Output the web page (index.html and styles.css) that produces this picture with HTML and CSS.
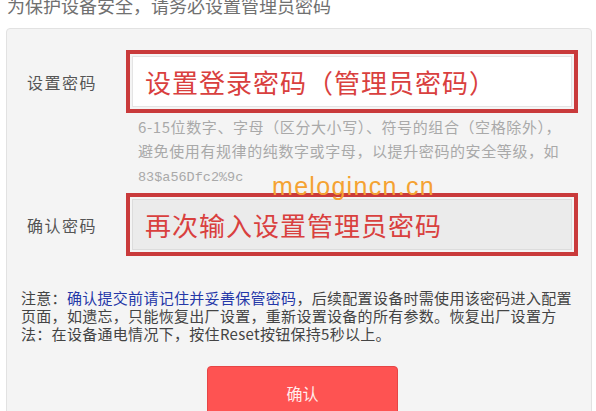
FILE: index.html
```html
<!DOCTYPE html>
<html lang="zh-CN">
<head>
    <meta charset="UTF-8">
    <meta name="viewport" content="width=device-width, initial-scale=1.0">
    <title>设置管理员密码</title>
    <link rel="stylesheet" href="styles.css">
</head>
<body>
    <p class="intro">为保护设备安全，请务必设置管理员密码</p>

    <section class="panel">
        <div class="field">
            <label class="field-label">设置密码</label>
            <div class="mark">
                <div class="input">设置登录密码（管理员密码）</div>
            </div>
        </div>

        <p class="hint">
            6-15位数字、字母（区分大小写）、符号的组合（空格除外），<br>
            避免使用有规律的纯数字或字母，以提升密码的安全等级，如<br>
            <span class="sample">83$a56Dfc2%9c</span>
        </p>

        <div class="field">
            <label class="field-label">确认密码</label>
            <div class="mark">
                <div class="input input-grey">再次输入设置管理员密码</div>
            </div>
        </div>

        <p class="note">
            注意：<span class="note-link">确认提交前请记住并妥善保管密码</span>，后续配置设备时需使用该密码进入配置<br>
            页面，如遗忘，只能恢复出厂设置，重新设置设备的所有参数。恢复出厂设置方<br>
            法：在设备通电情况下，按住Reset按钮保持5秒以上。
        </p>

        <button class="btn-confirm">确认</button>

        <span class="watermark">melogincn.cn</span>
    </section>
</body>
</html>
```

FILE: styles.css
```css
body {
    margin: 0;
    padding: 0;
    background: #fff;
    font-family: "Noto Sans CJK SC", "Liberation Sans", sans-serif;
    color: #444;
    overflow: hidden;
}

.intro {
    margin: -6px 0 0 7px;
    font-size: 18px;
    line-height: 22px;
    color: #707070;
}

.panel {
    position: relative;
    margin: 12px 4px 0 6px;
    padding: 21px 0 20px 20px;
    background: #f4f4f4;
    border: 1px solid #e2e2e2;
    border-radius: 4px;
}

.field {
    display: flex;
    align-items: center;
}

.field-label {
    width: 99px;
    font-size: 16px;
    letter-spacing: 1.5px;
    color: #555;
}

.mark {
    box-sizing: border-box;
    width: 452px;
    height: 63px;
    padding: 2px;
    border: 4px solid #c93a3b;
}

.input {
    box-sizing: border-box;
    height: 100%;
    padding-left: 12px;
    background: #fff;
    border: 1px solid #e4e4e4;
    font-size: 26px;
    line-height: 49px;
    letter-spacing: 1px;
    color: #d9403e;
}

.input-grey {
    background: #ebebeb;
    border-color: #dcdcdc;
}

.hint {
    margin: 2px 0 3px 111px;
    font-size: 15px;
    line-height: 24px;
    letter-spacing: 0.6px;
    color: #a9a9a9;
}

.sample {
    font-family: "Liberation Mono", monospace;
    font-size: 13.5px;
    letter-spacing: 0;
}

.note {
    margin: 33px 0 0 -6px;
    font-size: 15px;
    line-height: 18px;
    letter-spacing: 0.3px;
    color: #444;
}

.note-link {
    color: #2437a8;
}

.btn-confirm {
    display: block;
    width: 191px;
    height: 54px;
    margin: 23px 0 0 180px;
    background: #fe5352;
    border: 1px solid #e64545;
    border-radius: 4px;
    font-family: inherit;
    font-size: 16px;
    color: #ffecec;
}

.watermark {
    position: absolute;
    left: 265px;
    top: 145px;
    font-family: "Liberation Sans", sans-serif;
    font-size: 25px;
    line-height: 25px;
    letter-spacing: 1.3px;
    color: #f4a232;
}
```
